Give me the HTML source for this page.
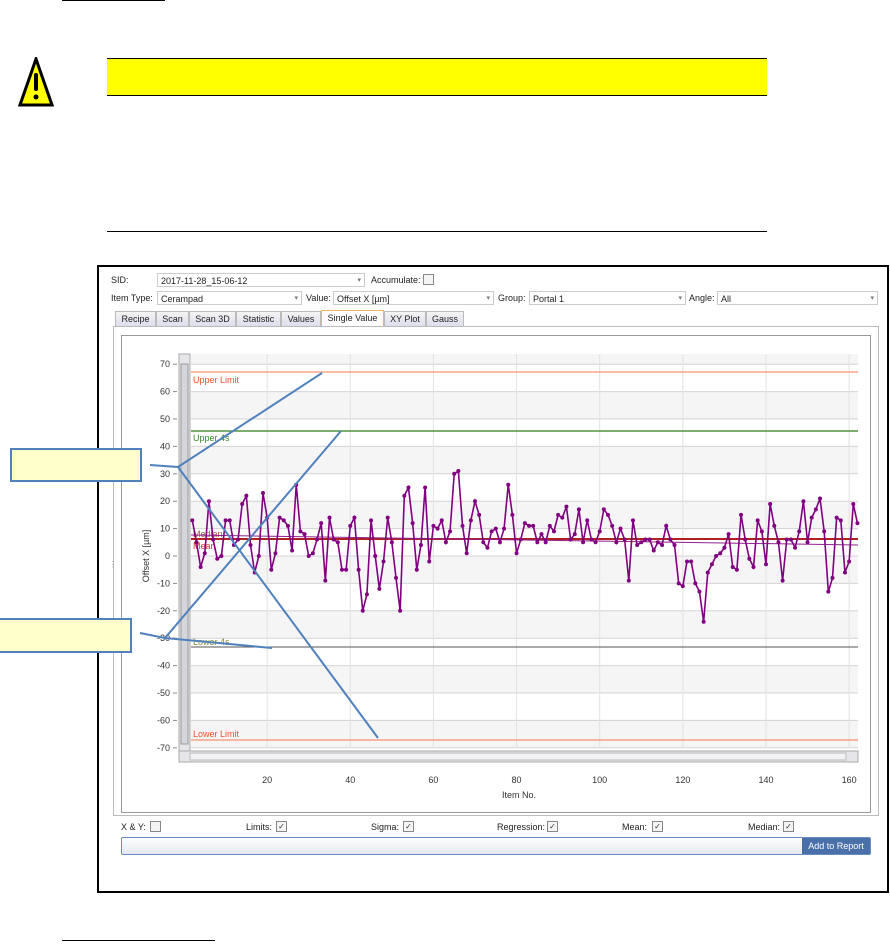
<!DOCTYPE html>
<html><head><meta charset="utf-8"><style>
body{margin:0;width:890px;height:952px;background:#fff;position:relative;overflow:hidden;font-family:"Liberation Sans",sans-serif;font-size:9px;color:#222}
.a{position:absolute}
.cb{position:absolute;width:9px;height:9px;border:1px solid #888;background:#f4f4f4;font-size:8px;line-height:9px;text-align:center;color:#333}
.dd{position:absolute;height:14px;border:1px solid #ccc;background:#fff;font-size:9px;line-height:14px;padding-left:3px;box-sizing:border-box}
.dd:after{content:"▾";position:absolute;right:3px;top:0;font-size:7px;color:#777}
.tab{position:absolute;top:311px;height:15px;border:1px solid #bbb;border-bottom:none;background:linear-gradient(#f4f4f4,#dde);font-size:9px;line-height:15px;text-align:center;box-sizing:border-box;white-space:nowrap;overflow:hidden}
</style></head><body>
<div class="a" style="left:62px;top:0;width:103px;height:1px;background:#000"></div>
<div class="a" style="left:107px;top:58px;width:660px;height:36px;background:#ffff00;border-top:1px solid #000;border-bottom:1px solid #000"></div>
<svg class="a" style="left:18px;top:57px" width="36" height="50" viewBox="0 0 36 50"><polygon points="18,2 34,48 2,48" fill="#ffff00" stroke="#000" stroke-width="3"/><rect x="16" y="16" width="4" height="18" rx="2" fill="#000"/><circle cx="18" cy="40" r="2.5" fill="#000"/></svg>
<div class="a" style="left:107px;top:231px;width:660px;height:1px;background:#000"></div>
<div class="a" style="left:62px;top:940px;width:153px;height:1px;background:#000"></div>

<div class="a" style="left:97px;top:265px;width:792px;height:628px;border:2px solid #000;box-sizing:border-box"></div>
<div class="a" style="left:111px;top:275px">SID:</div>
<div class="dd" style="left:157px;top:273px;width:208px">2017-11-28_15-06-12</div>
<div class="a" style="left:371px;top:275px">Accumulate:</div>
<div class="cb" style="left:423px;top:274px"></div>
<div class="a" style="left:111px;top:293px">Item Type:</div>
<div class="dd" style="left:157px;top:291px;width:145px">Cerampad</div>
<div class="a" style="left:306px;top:293px">Value:</div>
<div class="dd" style="left:333px;top:291px;width:161px">Offset X [µm]</div>
<div class="a" style="left:498px;top:293px">Group:</div>
<div class="dd" style="left:529px;top:291px;width:157px">Portal 1</div>
<div class="a" style="left:689px;top:293px">Angle:</div>
<div class="dd" style="left:717px;top:291px;width:161px">All</div>
<div class="tab" style="left:115px;width:41px">Recipe</div>
<div class="tab" style="left:156px;width:33px">Scan</div>
<div class="tab" style="left:189px;width:47px">Scan 3D</div>
<div class="tab" style="left:236px;width:45px">Statistic</div>
<div class="tab" style="left:281px;width:40px">Values</div>
<div class="tab" style="left:321px;width:63px;background:#fff;border-color:#e8b860;top:310px;height:17px">Single Value</div>
<div class="tab" style="left:384px;width:42px">XY Plot</div>
<div class="tab" style="left:426px;width:38px">Gauss</div>
<div class="a" style="left:113px;top:326px;width:766px;height:490px;border:1px solid #bbb;box-sizing:border-box"></div>
<div class="a" style="left:121px;top:335px;width:750px;height:478px;border:1px solid #999;box-sizing:border-box"></div>
<div class="a" style="left:109px;top:560px;font-size:8px;color:#888">⋮</div>

<svg class="a" style="left:0;top:0" width="890" height="952" id="ch"></svg>

<div class="a" style="left:121px;top:822px">X &amp; Y:</div><div class="cb" style="left:150px;top:821px"></div>
<div class="a" style="left:246px;top:822px">Limits:</div><div class="cb" style="left:276px;top:821px">✓</div>
<div class="a" style="left:371px;top:822px">Sigma:</div><div class="cb" style="left:403px;top:821px">✓</div>
<div class="a" style="left:497px;top:822px">Regression:</div><div class="cb" style="left:547px;top:821px">✓</div>
<div class="a" style="left:622px;top:822px">Mean:</div><div class="cb" style="left:652px;top:821px">✓</div>
<div class="a" style="left:748px;top:822px">Median:</div><div class="cb" style="left:783px;top:821px">✓</div>
<div class="a" style="left:121px;top:837px;width:750px;height:18px;border:1px solid #6a8cc0;border-radius:2px;background:linear-gradient(#fff,#e4e8ef);box-sizing:border-box"></div>
<div class="a" style="left:802px;top:838px;width:68px;height:16px;background:#4a70aa;color:#fff;font-size:9px;line-height:16px;text-align:center">Add to Report</div>

<div class="a" style="left:10px;top:448px;width:132px;height:34px;background:#ffffcc;border:2px solid #4f81bd;box-sizing:border-box"></div>
<div class="a" style="left:-2px;top:618px;width:134px;height:35px;background:#ffffcc;border:2px solid #4f81bd;box-sizing:border-box"></div>
<svg class="a" style="left:0;top:0" width="890" height="952"><g stroke="#4f81bd" stroke-width="2" fill="none">
<polyline points="150,465 178,467 322,373"/><line x1="178" y1="467" x2="378" y2="738"/>
<polyline points="140,633 165,638 341,431"/><line x1="165" y1="638" x2="272" y2="648"/></g></svg>

<script>
var s=document.getElementById('ch'),h='';
function Y(v){return 556-v*2.74}function X(i){return 184+i*4.157}
var L=191,R=858,T=354,B=748;
h+='<rect x="'+L+'" y="'+T+'" width="'+(R-L)+'" height="'+(B-T)+'" fill="#fff"/>';
for(var v=-70;v<70;v+=20){h+='<rect x="'+L+'" y="'+Y(v+10)+'" width="'+(R-L)+'" height="27.4" fill="#f5f5f5"/>';}
h+='<rect x="'+L+'" y="'+T+'" width="'+(R-L)+'" height="'+(Y(70)-T)+'" fill="#f5f5f5"/>';
for(var v=-70;v<=70;v+=10){h+='<line x1="'+L+'" x2="'+R+'" y1="'+Y(v)+'" y2="'+Y(v)+'" stroke="#d4d4d4"/>';
h+='<text x="170" y="'+(Y(v)+3)+'" font-size="9" text-anchor="end" fill="#333" font-family="Liberation Sans">'+v+'</text><line x1="173" x2="177" y1="'+Y(v)+'" y2="'+Y(v)+'" stroke="#888"/>';}
for(var i=20;i<=160;i+=20){h+='<line x1="'+X(i)+'" x2="'+X(i)+'" y1="'+T+'" y2="'+B+'" stroke="#e2e2e2"/><text x="'+X(i)+'" y="783" font-size="9" text-anchor="middle" fill="#333" font-family="Liberation Sans">'+i+'</text>';}
h+='<text x="519" y="798" font-size="9" text-anchor="middle" fill="#333" font-family="Liberation Sans">Item No.</text>';
h+='<text transform="translate(149,556) rotate(-90)" font-size="9" text-anchor="middle" fill="#333" font-family="Liberation Sans">Offset X [µm]</text>';
h+='<line x1="'+L+'" x2="'+R+'" y1="372" y2="372" stroke="#f59070" stroke-width="1.2"/><text x="193" y="383" font-size="9" fill="#f05030" font-family="Liberation Sans">Upper Limit</text>';
h+='<line x1="'+L+'" x2="'+R+'" y1="431" y2="431" stroke="#2e7d1e" stroke-width="1.2"/><text x="193" y="441" font-size="9" fill="#3a8a2a" font-family="Liberation Sans">Upper 4s</text>';
h+='<line x1="'+L+'" x2="'+R+'" y1="647" y2="647" stroke="#555" stroke-width="1"/><text x="193" y="645" font-size="9" fill="#8a8a30" font-family="Liberation Sans">Lower 4s</text>';
h+='<line x1="'+L+'" x2="'+R+'" y1="740" y2="740" stroke="#f59070" stroke-width="1.2"/><text x="193" y="737" font-size="9" fill="#f05030" font-family="Liberation Sans">Lower Limit</text>';
h+='<text x="193" y="537" font-size="9" fill="#a06040" font-family="Liberation Sans">Median</text><text x="193" y="549" font-size="9" fill="#e03030" font-family="Liberation Sans">Mean</text>';
h+='<line x1="'+L+'" x2="'+R+'" y1="539" y2="539" stroke="#b02020" stroke-width="2"/><line x1="'+L+'" x2="'+R+'" y1="535" y2="545" stroke="#902090" stroke-width="1"/>';
var d=[13,5,-4,1,20,6,-1,0,13,13,4,6,19,22,4,-6,0,23,14,-5,1,14,13,11,2,26,9,8,0,1,6,12,-9,14,6,5,-5,-5,11,14,-5,-20,-14,13,0,-12,-2,14,5,-8,-20,22,25,12,-5,4,25,-2,11,10,13,5,9,30,31,11,1,13,20,15,5,3,9,10,5,10,26,15,1,6,12,11,11,5,8,5,11,9,15,14,18,6,8,17,5,13,6,5,9,17,15,11,5,10,6,-9,13,4,5,6,6,2,5,4,11,6,4,-10,-11,-2,-2,-10,-13,-24,-6,-3,0,1,3,8,-4,-5,15,6,-1,-4,13,9,-3,19,11,5,-9,6,6,3,9,20,5,14,17,21,9,-13,-8,14,13,-6,-2,19,12,-5];
var p=[],c='';for(var i=0;i<d.length;i++){var x=X(i+2);if(x>R)break;p.push(x+','+Y(d[i]));c+='<circle cx="'+x+'" cy="'+Y(d[i])+'" r="2" fill="#800080"/>';}
h+='<polyline points="'+p.join(' ')+'" fill="none" stroke="#800080" stroke-width="1.6"/>'+c;
h+='<rect x="179" y="354" width="11" height="406" fill="#e6e6ea" stroke="#aaa"/><rect x="181" y="364" width="7" height="380" fill="#d4d6dc" stroke="#999"/>';
h+='<rect x="179" y="751" width="679" height="11" fill="#e6e6ea" stroke="#aaa"/><rect x="190" y="753" width="656" height="7" fill="#f2f2f4" stroke="#bbb"/>';
s.innerHTML=h;
</script>
</body></html>
